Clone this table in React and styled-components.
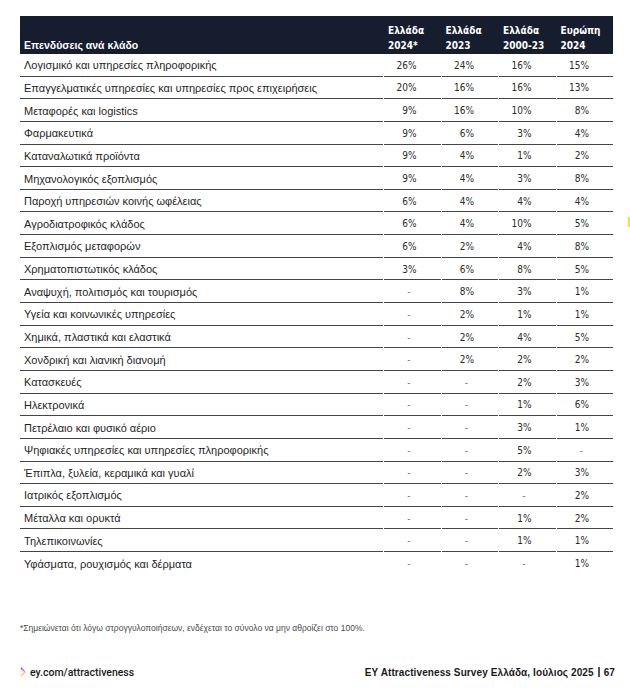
import React from 'react';
import styled, { createGlobalStyle } from 'styled-components';

const GlobalStyle = createGlobalStyle`
  html, body { margin: 0; padding: 0; background: #fff; }
  body { font-family: "Liberation Sans", Arial, sans-serif; }
`;

const rows = [
  ['Λογισμικό και υπηρεσίες πληροφορικής', '26%', '24%', '16%', '15%'],
  ['Επαγγελματικές υπηρεσίες και υπηρεσίες προς επιχειρήσεις', '20%', '16%', '16%', '13%'],
  ['Μεταφορές και logistics', '9%', '16%', '10%', '8%'],
  ['Φαρμακευτικά', '9%', '6%', '3%', '4%'],
  ['Καταναλωτικά προϊόντα', '9%', '4%', '1%', '2%'],
  ['Μηχανολογικός εξοπλισμός', '9%', '4%', '3%', '8%'],
  ['Παροχή υπηρεσιών κοινής ωφέλειας', '6%', '4%', '4%', '4%'],
  ['Αγροδιατροφικός κλάδος', '6%', '4%', '10%', '5%'],
  ['Εξοπλισμός μεταφορών', '6%', '2%', '4%', '8%'],
  ['Χρηματοπιστωτικός κλάδος', '3%', '6%', '8%', '5%'],
  ['Αναψυχή, πολιτισμός και τουρισμός', '-', '8%', '3%', '1%'],
  ['Υγεία και κοινωνικές υπηρεσίες', '-', '2%', '1%', '1%'],
  ['Χημικά, πλαστικά και ελαστικά', '-', '2%', '4%', '5%'],
  ['Χονδρική και λιανική διανομή', '-', '2%', '2%', '2%'],
  ['Κατασκευές', '-', '-', '2%', '3%'],
  ['Ηλεκτρονικά', '-', '-', '1%', '6%'],
  ['Πετρέλαιο και φυσικό αέριο', '-', '-', '3%', '1%'],
  ['Ψηφιακές υπηρεσίες και υπηρεσίες πληροφορικής', '-', '-', '5%', '-'],
  ['Έπιπλα, ξυλεία, κεραμικά και γυαλί', '-', '-', '2%', '3%'],
  ['Ιατρικός εξοπλισμός', '-', '-', '-', '2%'],
  ['Μέταλλα και ορυκτά', '-', '-', '1%', '2%'],
  ['Τηλεπικοινωνίες', '-', '-', '1%', '1%'],
  ['Υφάσματα, ρουχισμός και δέρματα', '-', '-', '-', '1%'],
];

const headers = [
  ['Ελλάδα', '2024*'],
  ['Ελλάδα', '2023'],
  ['Ελλάδα', '2000-23'],
  ['Ευρώπη', '2024'],
];

const Page = styled.div`
  position: relative;
  width: 630px;
  height: 697px;
  box-sizing: border-box;
  padding: 16px 17px 0 20px;
  display: flex;
  flex-direction: column;
`;

const Table = styled.div`
  display: flex;
  flex-direction: column;
  width: 593px;
`;

const HeadRow = styled.div`
  display: grid;
  grid-template-columns: 363px repeat(4, 57.5px);
  align-items: end;
  height: 38px;
  box-sizing: border-box;
  padding-bottom: 1px;
  background: #161d2e;
  color: #fff;
`;

const HeadTitle = styled.div`
  padding: 0 0 1px 4px;
  font-family: "Liberation Sans", Arial, sans-serif;
  font-weight: 700;
  font-size: 10.5px;
  line-height: 14px;
`;

const HeadCell = styled.div`
  padding-left: 5px;
  font-family: "DejaVu Sans Condensed", "DejaVu Sans", sans-serif;
  font-weight: 700;
  font-size: 10px;
  line-height: 14.5px;
  white-space: nowrap;
`;

const Row = styled.div`
  display: grid;
  grid-template-columns: 363px repeat(4, 56.5px);
  column-gap: 1px;
  height: 22.65px;
`;

const Label = styled.div`
  display: flex;
  align-items: center;
  padding: 1px 0 0 4px;
  box-sizing: border-box;
  font-size: 11px;
  color: #1f1f1f;
  white-space: nowrap;
  border-bottom: ${p => (p.$last ? 'none' : '1px solid #454545')};
`;

const Value = styled.div`
  display: flex;
  align-items: center;
  justify-content: flex-end;
  box-sizing: border-box;
  padding: 1px ${p => (p.$dash ? '30px' : '24px')} 0 0;
  font-family: "DejaVu Sans Condensed", "DejaVu Sans", sans-serif;
  font-size: 10px;
  color: ${p => (p.$dash ? '#777' : '#2b2b2b')};
  border-bottom: ${p => (p.$last ? 'none' : '1px solid #454545')};
`;

const Note = styled.div`
  margin-top: 48px;
  font-size: 8.5px;
  color: #4a4a4a;
`;

const Footer = styled.div`
  margin-top: 33px;
  display: flex;
  align-items: center;
  justify-content: space-between;
  width: 595px;
`;

const Link = styled.div`
  display: flex;
  align-items: center;
  gap: 4px;
  font-family: Roboto, "Liberation Sans", sans-serif;
  font-weight: 500;
  font-size: 10.5px;
  color: #1a1a1a;
`;

const Title = styled.div`
  font-family: "Liberation Sans", Arial, sans-serif;
  font-weight: 700;
  font-size: 10px;
  letter-spacing: 0.1px;
  color: #1a1a1a;
  display: flex;
  align-items: center;
  gap: 4px;
`;

const Bar = styled.span`
  display: inline-block;
  width: 2px;
  height: 10px;
  background: #555;
`;

const Marker = styled.div`
  position: absolute;
  right: 0;
  top: 217px;
  width: 2px;
  height: 10px;
  background: #ffe600;
`;

function Chevron() {
  return (
    <svg width="6" height="10" viewBox="0 0 6 10">
      <defs>
        <linearGradient id="chev" x1="0" y1="0" x2="0" y2="1">
          <stop offset="0" stopColor="#e4007c" />
          <stop offset="0.5" stopColor="#f7a1c4" />
          <stop offset="1" stopColor="#ffe600" />
        </linearGradient>
      </defs>
      <polyline points="1,1 5,5 1,9" fill="none" stroke="url(#chev)" strokeWidth="1.3" />
    </svg>
  );
}

export default function App() {
  return (
    <>
      <GlobalStyle />
      <Page>
        <Table>
          <HeadRow>
            <HeadTitle>Επενδύσεις ανά κλάδο</HeadTitle>
            {headers.map((h, i) => (
              <HeadCell key={i}>
                {h[0]}
                <br />
                {h[1]}
              </HeadCell>
            ))}
          </HeadRow>
          {rows.map((r, i) => {
            const last = i === rows.length - 1;
            return (
              <Row key={i}>
                <Label $last={last}>{r[0]}</Label>
                {r.slice(1).map((v, j) => (
                  <Value key={j} $last={last} $dash={v === '-'}>
                    {v}
                  </Value>
                ))}
              </Row>
            );
          })}
        </Table>
        <Note>
          *Σημειώνεται ότι λόγω στρογγυλοποιήσεων, ενδέχεται το σύνολο να μην αθροίζει στο 100%.
        </Note>
        <Footer>
          <Link>
            <Chevron />
            ey.com/attractiveness
          </Link>
          <Title>
            EY Attractiveness Survey Ελλάδα, Ιούλιος 2025 <Bar /> 67
          </Title>
        </Footer>
        <Marker />
      </Page>
    </>
  );
}
